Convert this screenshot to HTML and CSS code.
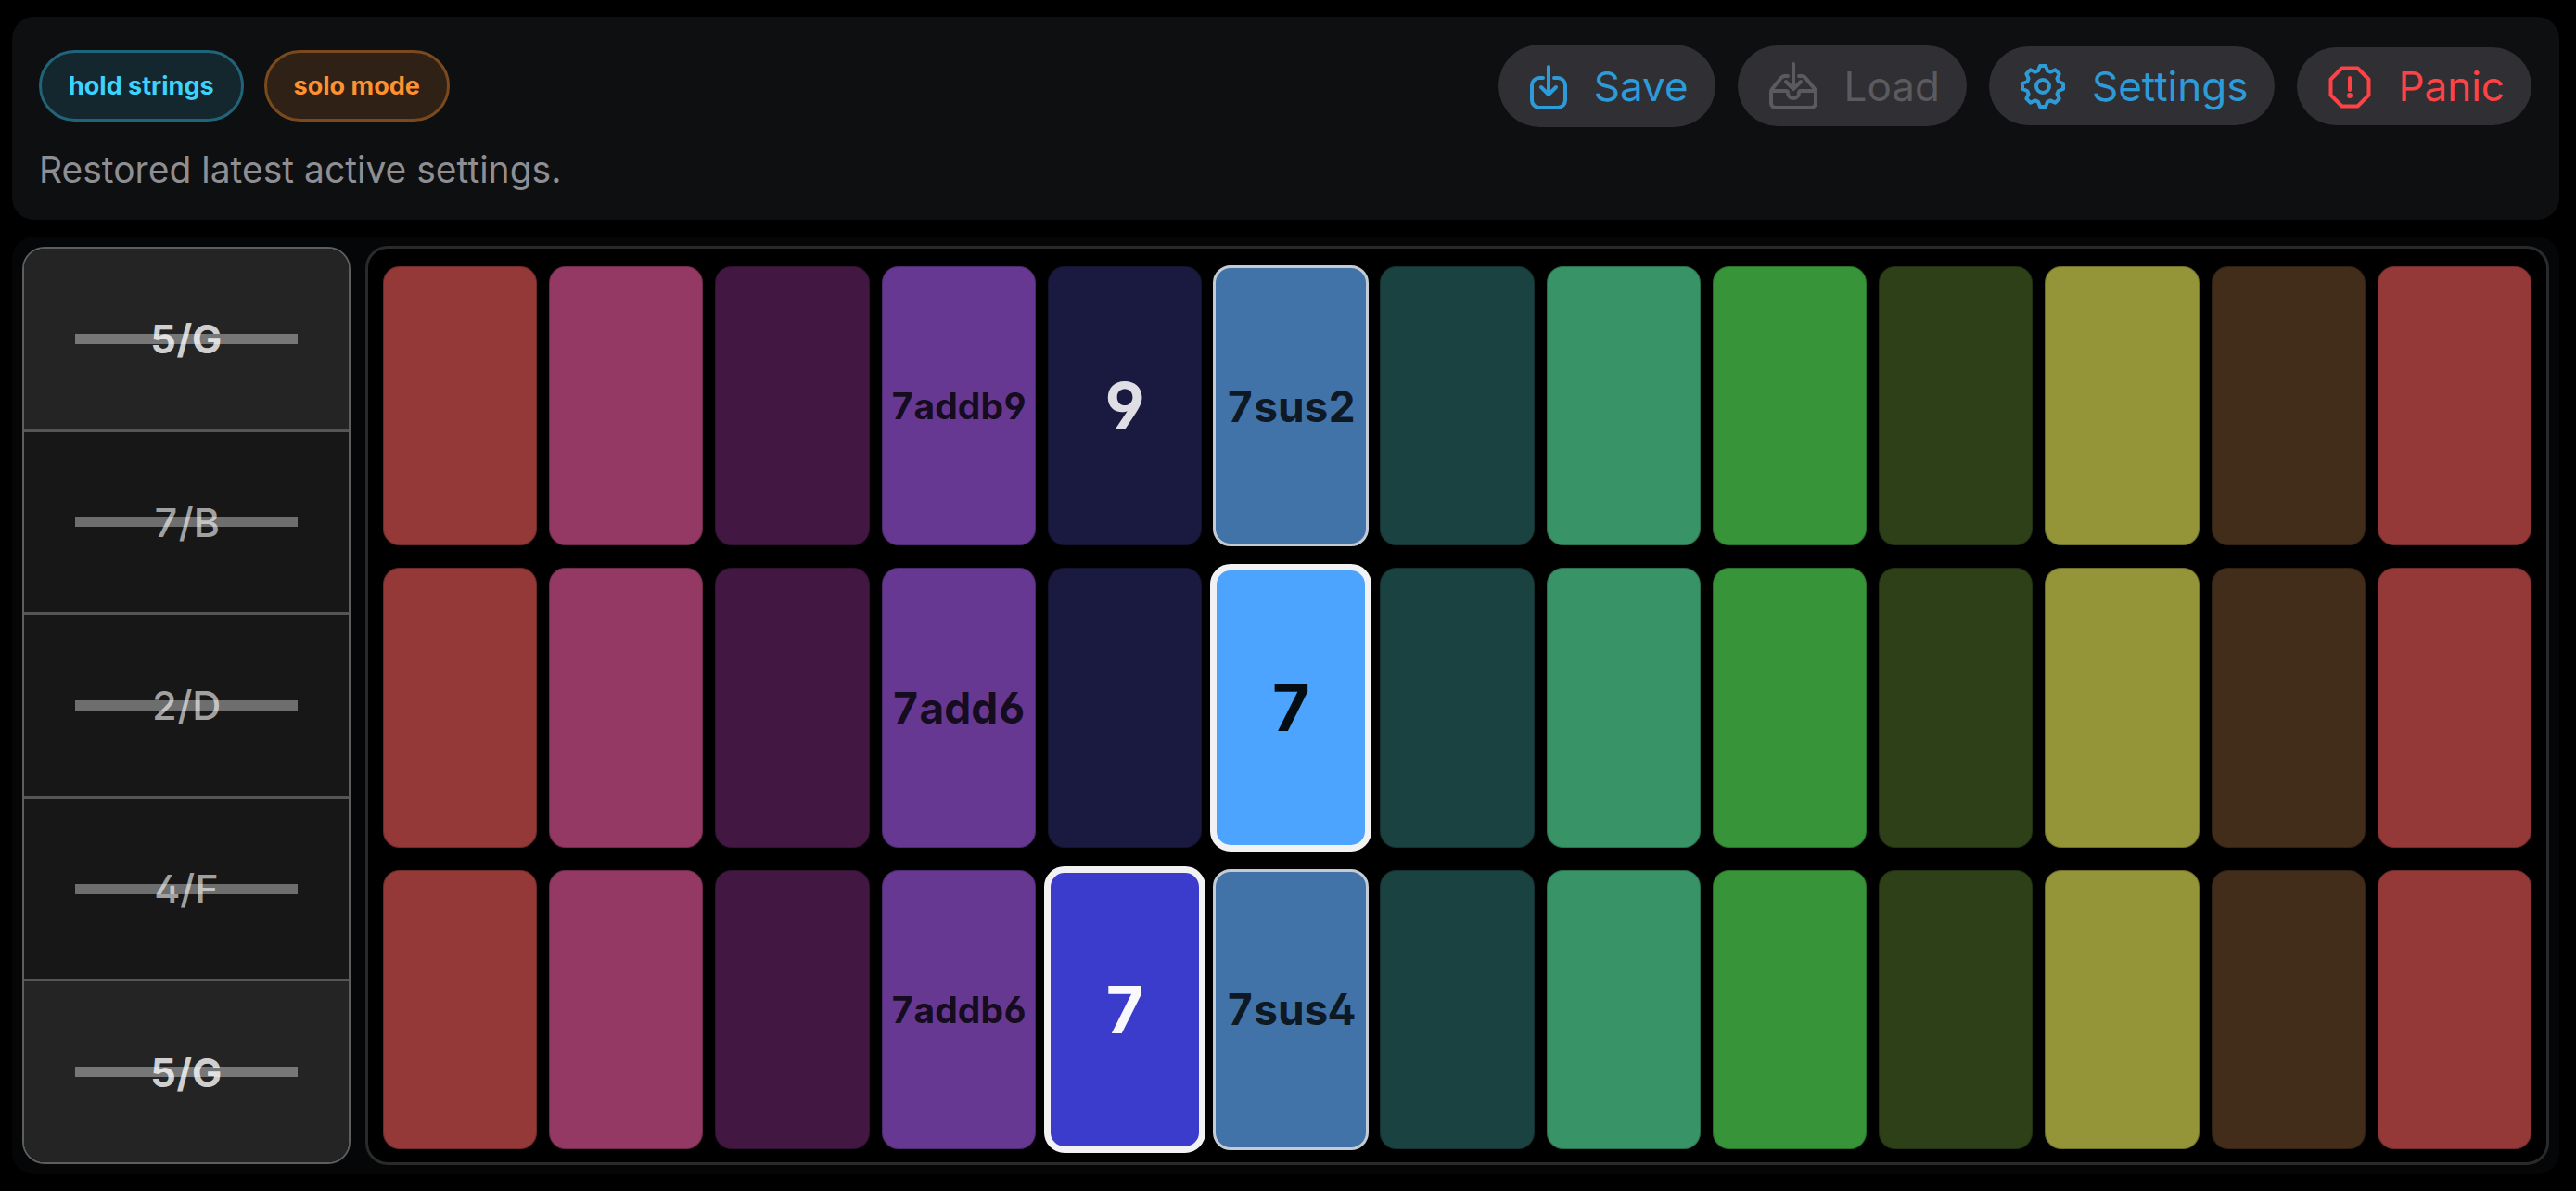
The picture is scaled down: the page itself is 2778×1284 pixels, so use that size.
FILE: index.html
```html
<!DOCTYPE html>
<html lang="en">
<head>
<meta charset="utf-8">
<meta name="viewport" content="width=device-width, initial-scale=1">
<title>Chord Pads</title>
<link rel="stylesheet" href="styles.css">
</head>
<body>
<header class="topbar">
  <div class="topbar-row">
    <div class="chips">
      <button type="button" class="chip chip-hold" aria-pressed="true">hold strings</button>
      <button type="button" class="chip chip-solo" aria-pressed="true">solo mode</button>
    </div>
    <div class="actions">
      <button type="button" class="action">
        <svg class="icon" width="40" height="49" viewBox="0 0 40 49" aria-hidden="true">
          <path d="M14 16H10a8 8 0 0 0-8 8V40a8 8 0 0 0 8 8H30a8 8 0 0 0 8-8V24a8 8 0 0 0-8-8H26M20 4V33M12 26l8 8 8-8"/>
        </svg>
        <span>Save</span>
      </button>
      <button type="button" class="action" disabled>
        <svg class="icon" width="52" height="47" viewBox="0 0 52 47" aria-hidden="true">
          <path d="M20 13H17q-3 0-5 3L3 27q-1 2-1 4V42a5 5 0 0 0 5 5H45a5 5 0 0 0 5-5V31q0-2-1-4L40 16q-2-3-5-3H32M2 29H18q2 0 2 2a6 6 0 0 0 12 0q0-2 2-2H50M26 0V26M18 19l8 8 8-8"/>
        </svg>
        <span>Load</span>
      </button>
      <button type="button" class="action">
        <svg class="icon" width="48" height="45" viewBox="-24 -23 48 45" aria-hidden="true">
          <path d="M-3-22L3-22 5-16.8 8.3-15.4 13.4-17.7 17.7-13.4 15.4-8.3 16.8-5 22-3 22 3 16.8 5 15.4 8.3 17.7 13.4 13.4 17.7 8.3 15.4 5 16.8 3 22-3 22-5 16.8-8.3 15.4-13.4 17.7-17.7 13.4-15.4 8.3-16.8 5-22 3-22-3-16.8-5-15.4-8.3-17.7-13.4-13.4-17.7-8.3-15.4-5-16.8Z"/>
          <circle r="7"/>
        </svg>
        <span>Settings</span>
      </button>
      <button type="button" class="action action-danger">
        <svg class="icon" width="46" height="44" viewBox="-23 -23 46 44" aria-hidden="true">
          <path d="M-8.5-20.5H8.5L20.5-8.5V8.5L8.5 20.5H-8.5L-20.5 8.5V-8.5ZM0-10V3"/>
          <circle class="dot" cy="9" r="3"/>
        </svg>
        <span>Panic</span>
      </button>
    </div>
  </div>
  <p class="status">Restored latest active settings.</p>
</header>

<main class="instrument">
  <section class="strings" aria-label="Strings">
    <button type="button" class="string root"><span>5/G</span></button>
    <button type="button" class="string"><span>7/B</span></button>
    <button type="button" class="string"><span>2/D</span></button>
    <button type="button" class="string"><span>4/F</span></button>
    <button type="button" class="string root"><span>5/G</span></button>
  </section>

  <section class="pads" aria-label="Chords">
    <button type="button" class="pad red"></button>
    <button type="button" class="pad pink"></button>
    <button type="button" class="pad plum"></button>
    <button type="button" class="pad purple small">7addb9</button>
    <button type="button" class="pad navy large">9</button>
    <button type="button" class="pad blue marked">7sus2</button>
    <button type="button" class="pad teal"></button>
    <button type="button" class="pad jade"></button>
    <button type="button" class="pad green"></button>
    <button type="button" class="pad moss"></button>
    <button type="button" class="pad yellow"></button>
    <button type="button" class="pad brown"></button>
    <button type="button" class="pad red"></button>

    <button type="button" class="pad red"></button>
    <button type="button" class="pad pink"></button>
    <button type="button" class="pad plum"></button>
    <button type="button" class="pad purple">7add6</button>
    <button type="button" class="pad navy"></button>
    <button type="button" class="pad blue large active">7</button>
    <button type="button" class="pad teal"></button>
    <button type="button" class="pad jade"></button>
    <button type="button" class="pad green"></button>
    <button type="button" class="pad moss"></button>
    <button type="button" class="pad yellow"></button>
    <button type="button" class="pad brown"></button>
    <button type="button" class="pad red"></button>

    <button type="button" class="pad red"></button>
    <button type="button" class="pad pink"></button>
    <button type="button" class="pad plum"></button>
    <button type="button" class="pad purple small">7addb6</button>
    <button type="button" class="pad navy large active">7</button>
    <button type="button" class="pad blue marked">7sus4</button>
    <button type="button" class="pad teal"></button>
    <button type="button" class="pad jade"></button>
    <button type="button" class="pad green"></button>
    <button type="button" class="pad moss"></button>
    <button type="button" class="pad yellow"></button>
    <button type="button" class="pad brown"></button>
    <button type="button" class="pad red"></button>
  </section>
</main>
</body>
</html>
```
FILE: styles.css
```css
* {
  box-sizing: border-box;
}

body {
  margin: 0;
  min-height: 100vh;
  padding: 18px 18px 18px 13px;
  display: flex;
  flex-direction: column;
  gap: 18px;
  background: #000;
  color: #fff;
  font-family: Inter, "Liberation Sans", sans-serif;
}

button {
  margin: 0;
  border: 0;
  padding: 0;
  font-family: inherit;
  cursor: pointer;
}

/* Top bar */

.topbar {
  padding: 30px 30px 30px 29px;
  border-radius: 24px;
  background: #0e0f11;
}

.topbar-row {
  display: flex;
  align-items: center;
  justify-content: space-between;
}

.chips {
  display: flex;
  gap: 22px;
}

.chip {
  height: 77px;
  padding: 0 29px;
  border: 3px solid;
  border-radius: 39px;
  font-size: 27px;
  font-weight: 700;
}

.chip-hold {
  border-color: #20647a;
  background: #15272e;
  color: #3cd3fe;
}

.chip-solo {
  border-color: #7a4a1e;
  background: #2f2116;
  color: #ff9230;
}

.actions {
  display: flex;
  align-items: center;
  gap: 24px;
}

.action {
  display: flex;
  align-items: center;
  gap: 29px;
  padding: 20px 29px 20px 34px;
  border-radius: 45px;
  background: #302f33;
  color: #2e9bd9;
  font-size: 44px;
  line-height: 44px;
}

.action:disabled {
  color: #5a5a5f;
  cursor: default;
}

.action-danger {
  color: #ff4245;
}

.icon {
  flex: none;
  overflow: visible;
  fill: none;
  stroke: currentColor;
  stroke-width: 4;
  stroke-linecap: round;
  stroke-linejoin: round;
}

.icon .dot {
  fill: currentColor;
  stroke: none;
}

.status {
  margin: 22px 0 0;
  color: #8e8e93;
  font-size: 39px;
  line-height: 48px;
}

/* Instrument */

.instrument {
  flex: 1;
  display: flex;
  gap: 16px;
  padding: 10px 11px;
  border-radius: 24px;
  background: #040607;
}

.strings {
  flex: none;
  width: 354px;
  margin: 1px 0;
  display: flex;
  flex-direction: column;
  border: 2px solid #5e5e5e;
  border-radius: 24px;
  overflow: hidden;
}

.string {
  flex: 1;
  display: grid;
  place-items: center;
  background: #171717;
  color: rgba(255, 255, 255, 0.62);
  font-size: 43px;
  font-weight: 500;
  font-feature-settings: "ss01", "tnum";
}

.string + .string {
  border-top: 3px solid #555;
}

.string::before {
  content: "";
  grid-area: 1 / 1;
  width: 240px;
  height: 11px;
  background: #6e6e6e;
}

.string span {
  grid-area: 1 / 1;
  z-index: 1;
}

.string.root {
  background: #242424;
  color: rgba(255, 255, 255, 0.8);
  font-weight: 700;
}

.string.root::before {
  background: #777;
}

.pads {
  flex: 1;
  min-width: 0;
  display: grid;
  grid-template-columns: repeat(13, minmax(0, 1fr));
  grid-auto-rows: minmax(0, 1fr);
  gap: 24px 13px;
  padding: 19px 16px 14px 16px;
  border: 3px solid #2a2a2b;
  border-radius: 24px;
  background: #000;
}

.pad {
  border-radius: 18px;
  box-shadow: inset 0 0 0 1px rgba(0, 0, 0, 0.25);
  color: rgba(0, 0, 0, 0.8);
  font-size: 46px;
  font-weight: 700;
  font-feature-settings: "ss01", "tnum";
  white-space: nowrap;
}

.small { font-size: 39px; }
.large { font-size: 70px; }

.red { background: #943838; }
.pink { background: #943864; }
.plum { background: #421842; }
.purple { background: #673892; }
.navy { background: #1a193f; color: rgba(255, 255, 255, 0.86); }
.blue { background: #4173a8; }
.teal { background: #1a4240; }
.jade { background: #389466; }
.green { background: #389438; }
.moss { background: #2d4018; }
.yellow { background: #949438; }
.brown { background: #422c1a; }

.marked {
  outline: 3px solid #c4cbd4;
  outline-offset: -2px;
}

.active {
  outline: 7px solid #f2f2f4;
  outline-offset: -3px;
}

.blue.active { background: #4ca4ff; color: #050d14; }
.navy.active { background: #3c3ccc; color: #f8f8fd; }
```
